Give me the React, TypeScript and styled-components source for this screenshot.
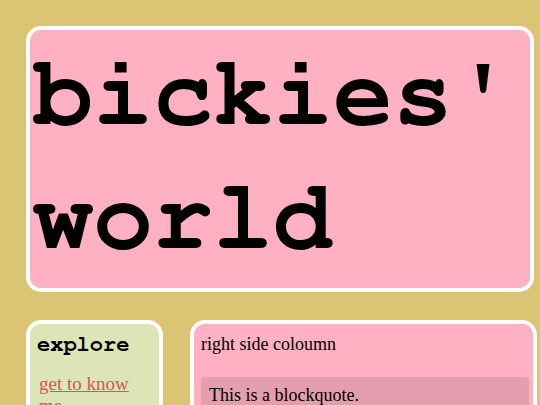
import React from 'react';
import styled, { createGlobalStyle } from 'styled-components';

const colors = {
  page: '#dbc474',
  pink: '#ffb0c3',
  green: '#dde4b6',
  quote: '#e49eb0',
  link: '#d9505f',
  border: '#ffffff',
  text: '#000000',
};

const monoStack = `"Nimbus Mono PS", "Nimbus Mono L", FreeMono, Courier, "Courier New", "Liberation Mono", monospace`;

const GlobalStyle = createGlobalStyle`
  html, body {
    margin: 0;
    padding: 0;
    overflow: hidden;
    background-color: ${colors.page};
    font-family: "Liberation Serif", "Times New Roman", serif;
    color: ${colors.text};
  }
`;

const Page = styled.div`
  display: flex;
  flex-direction: column;
  gap: 28px;
  padding: 26px 6px 0 26px;
  box-sizing: border-box;
  width: 540px;
`;

const Panel = styled.div<{ $bg: string }>`
  background-color: ${(p) => p.$bg};
  border: 4px solid ${colors.border};
  border-radius: 15px;
  box-sizing: border-box;
`;

const Header = styled(Panel)`
  width: 508px;
  padding: 2px 3px 8px;
`;

const SiteTitle = styled.h1`
  margin: 0;
  font-family: ${monoStack};
  font-weight: bold;
  font-size: 100px;
  line-height: 124px;
`;

const Columns = styled.div`
  display: flex;
  align-items: flex-start;
  gap: 27px;
  width: 511px;
`;

const Sidebar = styled(Panel)`
  flex: 0 0 137px;
  padding: 8px 7px;
`;

const Main = styled(Panel)`
  flex: 0 0 347px;
  padding: 10px 4px 10px 7px;
`;

const SideTitle = styled.h2`
  margin: 0 0 16px;
  font-family: ${monoStack};
  font-weight: bold;
  font-size: 22px;
  line-height: 25px;
`;

const NavLink = styled.a`
  display: block;
  color: ${colors.link};
  font-size: 19px;
  line-height: 22px;
  padding-left: 2px;
`;

const Text = styled.p`
  margin: 0 0 22px;
  font-size: 18px;
  line-height: 21px;
`;

const Quote = styled.blockquote`
  margin: 0;
  padding: 8px 8px 10px;
  background-color: ${colors.quote};
  border-radius: 4px;
  font-size: 18px;
  line-height: 21px;
`;

export default function App() {
  return (
    <>
      <GlobalStyle />
      <Page>
        <Header $bg={colors.pink}>
          <SiteTitle>bickies' world</SiteTitle>
        </Header>
        <Columns>
          <Sidebar $bg={colors.green}>
            <SideTitle>explore</SideTitle>
            <NavLink href="#">get to know me</NavLink>
          </Sidebar>
          <Main $bg={colors.pink}>
            <Text>right side coloumn</Text>
            <Quote>This is a blockquote.</Quote>
          </Main>
        </Columns>
      </Page>
    </>
  );
}
